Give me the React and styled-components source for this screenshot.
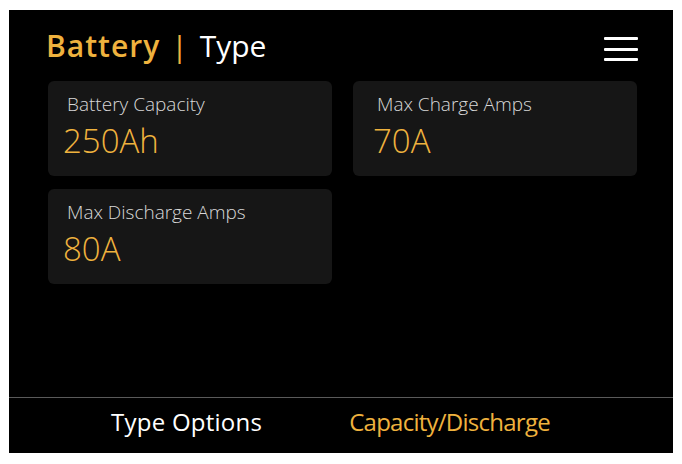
import styled, { createGlobalStyle } from "styled-components";

const GOLD = "#efb23e";

const STATS = [
  { label: "Battery Capacity", value: "250Ah", inset: 15 },
  { label: "Max Charge Amps", value: "70A", inset: 20 },
  { label: "Max Discharge Amps", value: "80A", inset: 15 },
];

export default function App() {
  return (
    <>
      <GlobalStyle />
      <Screen>
        <Header>
          <Title>
            <Accent>Battery</Accent>
            <Divider>|</Divider>
            <Sub>Type</Sub>
          </Title>
          <MenuButton aria-label="Menu">
            <span />
            <span />
            <span />
          </MenuButton>
        </Header>
        <Grid>
          {STATS.map(({ label, value, inset }) => (
            <Card key={label} $inset={inset}>
              <CardLabel>{label}</CardLabel>
              <CardValue>{value}</CardValue>
            </Card>
          ))}
        </Grid>
        <Footer>
          <Tab $tracking={0.25}>Type Options</Tab>
          <Tab $active $tracking={-0.75}>Capacity/Discharge</Tab>
        </Footer>
      </Screen>
    </>
  );
}

const GlobalStyle = createGlobalStyle`
  html, body { margin: 0; background: #fff; }
  body { padding: 10px 9px; font-family: "Open Sans", "Noto Sans", sans-serif; }
`;

const Screen = styled.div`
  width: 664px; height: 443px; background: #000; color: #fff;
  display: flex; flex-direction: column;
`;

const Header = styled.div`
  display: flex; align-items: flex-start; justify-content: space-between;
  padding: 15px 35px 0 37px;
`;
const Title = styled.h1`
  margin: 0; font-size: 30px; font-weight: 400; line-height: normal; white-space: pre;
  display: flex; align-items: baseline;
`;
const Accent = styled.span`color: ${GOLD}; font-weight: 600; letter-spacing: 1px;`;
const Divider = styled.span`color: ${GOLD}; margin: 0 12px 0 11px;`;
const Sub = styled.span`color: #fff;`;

const MenuButton = styled.button`
  width: 34px; height: 24px; margin-top: 12px; padding: 0; border: none; background: none; cursor: pointer;
  display: flex; flex-direction: column; justify-content: space-between;
  span { display: block; height: 3px; background: #fff; border-radius: 1px; }
`;

const Grid = styled.div`
  display: grid; grid-template-columns: 284px 284px; column-gap: 21px; row-gap: 13px;
  padding: 15px 0 0 39px;
`;
const Card = styled.div`
  height: 95px; box-sizing: border-box; background: #161616; border-radius: 6px;
  padding: 11px 12px 0 ${({ $inset }) => $inset}px;
`;
const CardLabel = styled.div`font-size: 19px; font-weight: 300; color: #d8d8d8; line-height: 24px; padding-left: 4px;`;
const CardValue = styled.div`font-size: 33px; font-weight: 300; color: ${GOLD}; line-height: 40px; margin-top: 5px;`;

const Footer = styled.div`
  margin-top: auto; border-top: 1px solid #5a5a5a; height: 56px; box-sizing: border-box;
  display: flex; align-items: flex-start; gap: 87px; padding: 7px 0 0 102px;
`;
const Tab = styled.div`
  font-size: 24px; font-weight: 400; line-height: normal;
  letter-spacing: ${({ $tracking }) => $tracking}px;
  color: ${({ $active }) => ($active ? GOLD : "#fff")};
`;
